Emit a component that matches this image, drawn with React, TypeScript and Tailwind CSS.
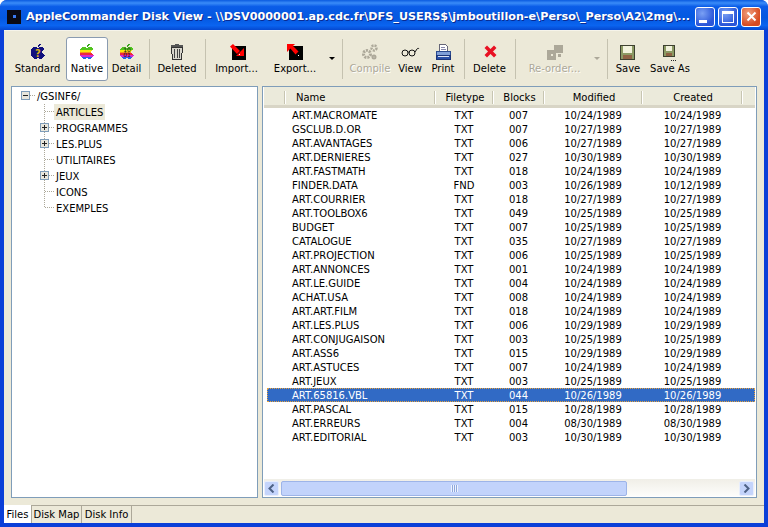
import type { ReactNode } from "react";

const FILES = [
  ["ART.MACROMATE", "TXT", "007", "10/24/1989", "10/24/1989"],
  ["GSCLUB.D.OR", "TXT", "007", "10/27/1989", "10/27/1989"],
  ["ART.AVANTAGES", "TXT", "006", "10/27/1989", "10/27/1989"],
  ["ART.DERNIERES", "TXT", "027", "10/30/1989", "10/30/1989"],
  ["ART.FASTMATH", "TXT", "018", "10/24/1989", "10/24/1989"],
  ["FINDER.DATA", "FND", "003", "10/26/1989", "10/12/1989"],
  ["ART.COURRIER", "TXT", "018", "10/27/1989", "10/27/1989"],
  ["ART.TOOLBOX6", "TXT", "049", "10/25/1989", "10/25/1989"],
  ["BUDGET", "TXT", "007", "10/25/1989", "10/25/1989"],
  ["CATALOGUE", "TXT", "035", "10/27/1989", "10/27/1989"],
  ["ART.PROJECTION", "TXT", "006", "10/25/1989", "10/25/1989"],
  ["ART.ANNONCES", "TXT", "001", "10/24/1989", "10/24/1989"],
  ["ART.LE.GUIDE", "TXT", "004", "10/24/1989", "10/24/1989"],
  ["ACHAT.USA", "TXT", "008", "10/24/1989", "10/24/1989"],
  ["ART.ART.FILM", "TXT", "018", "10/24/1989", "10/24/1989"],
  ["ART.LES.PLUS", "TXT", "006", "10/29/1989", "10/29/1989"],
  ["ART.CONJUGAISON", "TXT", "003", "10/25/1989", "10/25/1989"],
  ["ART.ASS6", "TXT", "015", "10/29/1989", "10/29/1989"],
  ["ART.ASTUCES", "TXT", "007", "10/24/1989", "10/24/1989"],
  ["ART.JEUX", "TXT", "003", "10/25/1989", "10/25/1989"],
  ["ART.65816.VBL", "TXT", "044", "10/26/1989", "10/26/1989"],
  ["ART.PASCAL", "TXT", "015", "10/28/1989", "10/28/1989"],
  ["ART.ERREURS", "TXT", "004", "08/30/1989", "08/30/1989"],
  ["ART.EDITORIAL", "TXT", "003", "10/30/1989", "10/30/1989"],
];

const TREE = [
  { name: "ARTICLES", plus: false, selected: true },
  { name: "PROGRAMMES", plus: true },
  { name: "LES.PLUS", plus: true },
  { name: "UTILITAIRES", plus: false },
  { name: "JEUX", plus: true },
  { name: "ICONS", plus: false },
  { name: "EXEMPLES", plus: false, last: true },
];

// pixel rows of the apple: [y, x, width]
const APPLE_ROWS = [
  [3, 2, 4],
  [3, 8, 4],
  [4, 1, 12],
  [5, 0, 13],
  [6, 0, 12],
  [7, 0, 11],
  [8, 0, 11],
  [9, 0, 12],
  [10, 0, 13],
  [11, 0, 14],
  [12, 1, 12],
  [13, 2, 10],
  [14, 3, 3],
  [14, 8, 3],
];

function stripe(y: number) {
  if (y <= 5) return "#52c41f";
  if (y <= 7) return "#fbe60e";
  if (y === 8) return "#f7941d";
  if (y <= 10) return "#ee2a3c";
  if (y <= 12) return "#d62bd0";
  return "#2a62e6";
}

function Apple({ dark, children }: { dark?: boolean; children?: ReactNode }) {
  return (
    <svg width="20" height="20" viewBox="0 0 20 20" shapeRendering="crispEdges">
      <g transform="translate(3 1)">
        <path d="M8 0h2v1H9v1H8v1H7V1h1Z" fill={dark ? "#10107e" : "#3aa81e"} />
        {APPLE_ROWS.map(([y, x, w]) => (
          <rect key={`${y}-${x}`} x={x} y={y} width={w} height="1" fill={dark ? "#10107e" : stripe(y)} />
        ))}
        {children}
      </g>
    </svg>
  );
}

function TransferIcon({ out }: { out?: boolean }) {
  return (
    <svg width="20" height="20" viewBox="0 0 20 20">
      <rect x={out ? 4 : 5} y="3" width="14" height="14" fill="#000" />
      {out ? (
        <g fill="#f00">
          <path d="M2 1h8L2 9Z" />
          <path d="M5 5l2.500-2.500 6 6-3 3Z" />
        </g>
      ) : (
        <g fill="#f00">
          <path d="M17 13H9l8-8Z" />
          <path d="M3 3.500 6 1l7 7-3 3Z" />
        </g>
      )}
      <rect x={out ? 13 : 12} y={out ? 12 : 11} width="1" height="1" fill="#fff" />
    </svg>
  );
}

function TrashIcon() {
  return (
    <svg width="20" height="20" viewBox="0 0 20 20" shapeRendering="crispEdges">
      <path d="M8 1h4v1h4v2H4V2h4Z" fill="#555" />
      <path d="M4.500 4.500h11l-1 12h-9Z" fill="#d8d6cc" stroke="#333" />
      <path d="M7.500 6v9M10 6v9M12.500 6v9" stroke="#444" />
    </svg>
  );
}

function GearsIcon() {
  return (
    <svg width="20" height="20" viewBox="0 0 20 20" fill="none" stroke="#aca899">
      <circle cx="7" cy="11" r="3.500" strokeWidth="3" strokeDasharray="2 1" />
      <circle cx="14" cy="5" r="2.500" strokeWidth="2.500" strokeDasharray="2 1" />
      <circle cx="14" cy="14" r="1.500" strokeWidth="2" />
    </svg>
  );
}

function GlassesIcon() {
  return (
    <svg width="20" height="20" viewBox="0 0 20 20" fill="none" stroke="#111" strokeWidth="1">
      <circle cx="5" cy="10" r="3" />
      <circle cx="12" cy="10" r="3" />
      <path d="M8 9.500c.700-.7 1-.7 1.500 0M15 9l2-3c.700-1 1.500-1 2 0" />
    </svg>
  );
}

function PrinterIcon() {
  return (
    <svg width="20" height="20" viewBox="0 0 20 20" shapeRendering="crispEdges">
      <path d="M6.500 1.500h6l2 2v5h-8Z" fill="#fff" stroke="#667" />
      <path d="M8 4h4M8 6h5" stroke="#88a" />
      <rect x="3.500" y="8.500" width="14" height="4" fill="#7f9fd8" stroke="#2a4a90" />
      <rect x="3.500" y="12.500" width="14" height="4" fill="#2a50a8" stroke="#1c3578" />
      <rect x="5" y="13" width="11" height="1" fill="#dce4f4" />
    </svg>
  );
}

function DeleteIcon() {
  return (
    <svg width="20" height="20" viewBox="0 0 20 20">
      <path d="M7 5l7 7M14 5l-7 7" stroke="#e81123" strokeWidth="3.500" strokeLinecap="square" />
    </svg>
  );
}

function ReorderIcon() {
  return (
    <svg width="20" height="20" viewBox="0 0 20 20" shapeRendering="crispEdges" fill="#aca899">
      <rect x="2" y="7" width="9" height="10" />
      <rect x="9" y="2" width="9" height="8" />
      <rect x="13" y="11" width="3" height="3" />
      <rect x="6" y="11" width="2" height="2" fill="#ece9d8" />
    </svg>
  );
}

function FloppyIcon({ dots }: { dots?: boolean }) {
  const x = dots ? 3 : 2;
  const size = dots ? 12 : 15;
  return (
    <svg width="20" height="20" viewBox="0 0 20 20" shapeRendering="crispEdges">
      <rect x={x + 0.5} y="2.500" width={size - 1} height={size - 1} fill="#8c9a64" stroke="#3d4030" />
      <rect x={x + 3} y="3" width={size - 6} height={Math.round(size / 2) - 1} fill="#f2f2dc" />
      <rect x={x + 3} y={Math.round(size / 2) + 4} width={size - 6} height={size - Math.round(size / 2) - 3} fill="#8f6244" />
      {dots && <path d="M11 17.500h1M13 17.500h1M15 17.500h1" stroke="#222" />}
    </svg>
  );
}

function ToolButton({
  width,
  label,
  icon,
  disabled,
  active,
}: {
  width: string;
  label: string;
  icon: ReactNode;
  disabled?: boolean;
  active?: boolean;
}) {
  return (
    <div
      className={`${width} h-[44px] flex flex-col items-center shrink-0 rounded-[3px] ${
        active ? "bg-white border border-[#8a9bb0]" : ""
      }`}
    >
      <div className={`h-[19px] ${active ? "mt-[5px]" : "mt-[6px]"}`}>{icon}</div>
      <span
        className={`leading-[14px] whitespace-nowrap ${
          disabled ? "text-[#aca899] [text-shadow:1px_1px_0_#fff]" : "text-black"
        }`}
      >
        {label}
      </span>
    </div>
  );
}

function Separator() {
  return (
    <div className="w-[8px] h-[40px] mt-[2px] shrink-0 flex justify-center">
      <div className="w-px h-full bg-[#c5c2b0]" />
    </div>
  );
}

function Caret({ width, disabled }: { width: string; disabled?: boolean }) {
  return (
    <div className={`${width} h-[44px] shrink-0 flex justify-center pt-[20px]`}>
      <div
        className={`w-0 h-0 border-x-[3px] border-x-transparent border-t-[3px] ${
          disabled ? "border-t-[#aca899]" : "border-t-black"
        }`}
      />
    </div>
  );
}

function Toolbar() {
  return (
    <div className="h-[55px] shrink-0 flex items-start pl-[7px] pt-[6px]">
      <ToolButton
        width="w-[53px]"
        label="Standard"
        icon={
          <Apple dark>
            <text x="7" y="12.500" fontSize="10" fontWeight="700" fontFamily="'DejaVu Sans', sans-serif" textAnchor="middle" fill="#d8b020">
              ?
            </text>
          </Apple>
        }
      />
      <div className="w-[2px] shrink-0" />
      <ToolButton width="w-[42px]" label="Native" active icon={<Apple />} />
      <ToolButton
        width="w-[37px]"
        label="Detail"
        icon={
          <Apple>
            <text x="7" y="7.500" fontSize="6" fontFamily="'DejaVu Sans', sans-serif" textAnchor="middle" fill="#111">
              10
            </text>
            <text x="7" y="13" fontSize="6" fontFamily="'DejaVu Sans', sans-serif" textAnchor="middle" fill="#111">
              01
            </text>
          </Apple>
        }
      />
      <Separator />
      <ToolButton width="w-[48px]" label="Deleted" icon={<TrashIcon />} />
      <Separator />
      <ToolButton width="w-[55px]" label="Import..." icon={<TransferIcon />} />
      <ToolButton width="w-[62px]" label="Export..." icon={<TransferIcon out />} />
      <Caret width="w-[11px]" />
      <div className="w-px shrink-0" />
      <Separator />
      <ToolButton width="w-[48px]" label="Compile" disabled icon={<GearsIcon />} />
      <ToolButton width="w-[32px]" label="View" icon={<GlassesIcon />} />
      <ToolButton width="w-[34px]" label="Print" icon={<PrinterIcon />} />
      <Separator />
      <ToolButton width="w-[43px]" label="Delete" icon={<DeleteIcon />} />
      <Separator />
      <ToolButton width="w-[71px]" label="Re-order..." disabled icon={<ReorderIcon />} />
      <Caret width="w-[13px]" disabled />
      <Separator />
      <ToolButton width="w-[34px]" label="Save" icon={<FloppyIcon />} />
      <ToolButton width="w-[50px]" label="Save As" icon={<FloppyIcon dots />} />
    </div>
  );
}

function TreeBox({ plus }: { plus?: boolean }) {
  return (
    <>
      <rect x="0.500" y="3.500" width="8" height="8" fill="#e8e6dc" stroke="#7f9db9" />
      <path d="M2 7.500h5" stroke="#222" />
      {plus && <path d="M4.500 5v5" stroke="#222" />}
    </>
  );
}

function TreeRow({
  name,
  plus,
  selected,
  last,
}: {
  name: string;
  plus?: boolean;
  selected?: boolean;
  last?: boolean;
}) {
  return (
    <div className="h-[16px] flex items-center pl-[28px]">
      <svg width="14" height="16" viewBox="0 0 14 16" shapeRendering="crispEdges" className="shrink-0">
        <path d={last ? "M4.500 0v8" : "M4.500 0v16"} stroke="#aca899" strokeDasharray="1 1" />
        <path d="M5 7.500h9" stroke="#aca899" strokeDasharray="1 1" />
        {plus && <TreeBox plus />}
      </svg>
      <span className={`block h-[16px] px-[2px] leading-[18px] text-black ${selected ? "bg-[#ece9d8]" : ""}`}>{name}</span>
    </div>
  );
}

function TreePane() {
  return (
    <div className="w-[247px] h-full shrink-0 bg-white border border-[#7f9db9] pt-[1px]">
      <div className="h-[16px] flex items-center pl-[9px]">
        <svg width="14" height="16" viewBox="0 0 14 16" shapeRendering="crispEdges" className="shrink-0">
          <TreeBox />
          <path d="M9 7.500h5" stroke="#aca899" strokeDasharray="1 1" />
        </svg>
        <span className="block h-[16px] pl-[2px] leading-[18px]">/GSINF6/</span>
      </div>
      {TREE.map((t) => (
        <TreeRow key={t.name} {...t} />
      ))}
    </div>
  );
}

function HeaderCell({ width, label, left }: { width: string; label?: string; left?: boolean }) {
  return (
    <div className={`${width} shrink-0 h-full flex items-center relative pt-[4px] ${left ? "pl-[10px]" : "justify-center"}`}>
      <span className="leading-[14px]">{label}</span>
      <div className="absolute right-0 top-[4px] h-[13px] w-[2px] bg-[#c7c5b2] border-r border-white" />
    </div>
  );
}

function TablePane() {
  return (
    <div className="w-[495px] h-full shrink-0 bg-white border border-[#7f9db9] flex flex-col">
      <div className="h-[21px] shrink-0 flex bg-[#ebeadb] border-b-[3px] border-[#d8d5c6] mx-[1px]">
        <HeaderCell width="w-[22px]" />
        <HeaderCell width="w-[150px]" label="Name" left />
        <HeaderCell width="w-[58px]" label="Filetype" />
        <HeaderCell width="w-[51px]" label="Blocks" />
        <HeaderCell width="w-[98px]" label="Modified" />
        <HeaderCell width="w-[100px]" label="Created" />
      </div>
      <div className="flex-1 min-h-0">
        {FILES.map((f) => {
          const selected = f[0] === "ART.65816.VBL";
          return (
            <div
              key={f[0]}
              className={`h-[14px] ml-[4px] mr-[1px] flex leading-[16px] ${
                selected
                  ? "bg-[#316ac5] text-white outline-1 outline-dotted outline-[#e8a33c] -outline-offset-1"
                  : "text-black"
              }`}
            >
              <div className="w-[168px] pl-[25px] shrink-0 whitespace-nowrap">{f[0]}</div>
              <div className="w-[58px] text-center shrink-0">{f[1]}</div>
              <div className="w-[51px] text-center shrink-0">{f[2]}</div>
              <div className="w-[98px] text-center shrink-0">{f[3]}</div>
              <div className="w-[101px] text-center shrink-0">{f[4]}</div>
            </div>
          );
        })}
      </div>
      <Scrollbar />
    </div>
  );
}

function ScrollButton({ dir }: { dir: "left" | "right" }) {
  return (
    <div className="w-[15px] h-[15px] shrink-0 rounded-[2px] bg-[#c4d4fb] border border-[#e8eefc] flex items-center justify-center">
      <svg width="7" height="9" viewBox="0 0 7 9" fill="none" stroke="#4d6185" strokeWidth="2">
        <path d={dir === "left" ? "M5.500 .5l-4 4 4 4" : "M1.500 .5l4 4-4 4"} />
      </svg>
    </div>
  );
}

function Scrollbar() {
  return (
    <div className="h-[17px] shrink-0 flex items-center pr-[1px] mb-[1px] mx-[1px] bg-gradient-to-b from-[#f1efe8] to-[#fdfdfb] border-t border-[#f0efe8]">
      <ScrollButton dir="left" />
      <div className="w-[2px] shrink-0" />
      <div className="w-[346px] h-[15px] shrink-0 rounded-[2px] bg-[#c2d3fb] border border-[#9db4e8] flex items-center justify-center">
        <div className="w-[7px] h-[7px] bg-[repeating-linear-gradient(90deg,#eef3fe_0_1px,#8fa8dc_1px_2px)]" />
      </div>
      <div className="flex-1" />
      <ScrollButton dir="right" />
    </div>
  );
}

function WindowButton({ children, close }: { children: ReactNode; close?: boolean }) {
  return (
    <div
      className={`w-[20px] h-[20px] rounded-[3px] border border-white flex items-center justify-center ${
        close
          ? "bg-[radial-gradient(circle_at_35%_30%,#f0a080,#d84b20_70%)]"
          : "bg-[radial-gradient(circle_at_35%_30%,#7aa0f4,#2a56d8_70%)]"
      }`}
    >
      {children}
    </div>
  );
}

function TitleBar() {
  return (
    <div className="h-[30px] shrink-0 flex items-center pl-[7px] pr-[7px] pt-[3px] rounded-t-[7px] bg-[linear-gradient(180deg,#0a5ae0_0%,#3a8cf8_10%,#0a5ce8_22%,#0458e0_60%,#0a64f0_85%,#0548d0_100%)]">
      <div className="w-[14px] h-[14px] bg-[#0a0a14] flex items-center justify-center shrink-0">
        <div className="w-[3px] h-[3px] bg-[#3a7af0]" />
      </div>
      <span className="ml-[5px] mt-[1px] flex-1 min-w-0 whitespace-nowrap text-white font-bold text-[11.2px] [text-shadow:1px_1px_0_#0a2a90]">
        {"AppleCommander Disk View - \\\\DSV0000001.ap.cdc.fr\\DFS_USERS$\\jmboutillon-e\\Perso\\_Perso\\A2\\2mg\\..."}
      </span>
      <div className="flex gap-[3px] shrink-0">
        <WindowButton>
          <div className="w-[8px] h-[3px] bg-white mt-[9px] -ml-[5px]" />
        </WindowButton>
        <WindowButton>
          <div className="w-[12px] h-[12px] border border-white border-t-[3px]" />
        </WindowButton>
        <WindowButton close>
          <svg width="11" height="11" viewBox="0 0 11 11">
            <path d="M1.500 1.500l8 8M9.500 1.500l-8 8" stroke="#fff" strokeWidth="2" />
          </svg>
        </WindowButton>
      </div>
    </div>
  );
}

function Tabs() {
  return (
    <div className="h-[18px] shrink-0 flex border-t border-[#aca899] text-black">
      <div className="w-[28px] -mt-px bg-white border-r border-[#aca899] text-center leading-[17px] pt-px">Files</div>
      <div className="w-[50px] border-r border-[#aca899] text-center leading-[17px]">Disk Map</div>
      <div className="w-[50px] border-r border-[#aca899] text-center leading-[17px]">Disk Info</div>
    </div>
  );
}

export default function App() {
  return (
    <div className="w-[768px] h-[527px] overflow-hidden bg-white font-['DejaVu_Sans',sans-serif] text-[10px]">
      <div className="h-full flex flex-col rounded-t-[7px] bg-[#0a3fd8]">
        <TitleBar />
        <div className="flex-1 min-h-0 flex flex-col mx-[4px] mb-[4px] bg-[#ece9d8] border-t border-[#f6f4ea]">
          <Toolbar />
          <div className="h-[412px] shrink-0 flex gap-[4px] pl-[7px]">
            <TreePane />
            <TablePane />
          </div>
          <div className="h-[7px] shrink-0" />
          <Tabs />
        </div>
      </div>
    </div>
  );
}
